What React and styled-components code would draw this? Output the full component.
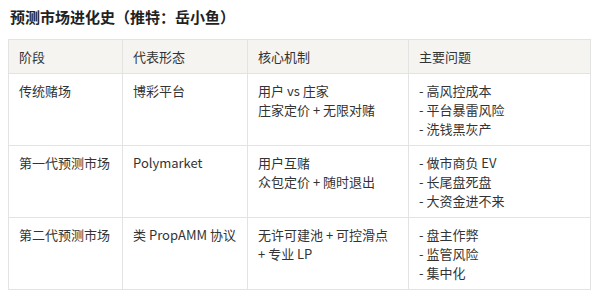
import React from 'react';
import styled, { createGlobalStyle } from 'styled-components';

const GlobalStyle = createGlobalStyle`
    body {
        margin: 0;
        background: #fff;
        font-family: "Noto Sans CJK SC", "Noto Sans", sans-serif;
        color: #333;
    }
`;

const Page = styled.div`
    padding: 6px 8px 0 8px;
`;

const Title = styled.h1`
    margin: 0 0 11px 2px;
    font-size: 15px;
    line-height: 22px;
    font-weight: 700;
    color: #222;
`;

const Table = styled.table`
    width: 582px;
    border-collapse: collapse;
    table-layout: fixed;
    font-size: 13px;
    line-height: 19px;
`;

const Head = styled.th`
    box-sizing: border-box;
    background: #f5f4f1;
    font-weight: 400;
    text-align: left;
    padding: 7px 10px;
    border: 1px solid #e3e3e3;
    width: ${props => props.$w}px;
`;

const Cell = styled.td`
    vertical-align: top;
    padding: 7px 10px;
    border: 1px solid #e3e3e3;
`;

const Line = styled.div`
    white-space: nowrap;
`;

const columns = [
    { label: '阶段', w: 114 },
    { label: '代表形态', w: 125 },
    { label: '核心机制', w: 161 },
    { label: '主要问题', w: 182 },
];

const rows = [
    ['传统赌场', '博彩平台', ['用户 vs 庄家', '庄家定价 + 无限对赌'], ['- 高风控成本', '- 平台暴雷风险', '- 洗钱黑灰产']],
    ['第一代预测市场', 'Polymarket', ['用户互赌', '众包定价 + 随时退出'], ['- 做市商负 EV', '- 长尾盘死盘', '- 大资金进不来']],
    ['第二代预测市场', '类 PropAMM 协议', ['无许可建池 + 可控滑点', '+ 专业 LP'], ['- 盘主作弊', '- 监管风险', '- 集中化']],
];

const renderCell = (value) =>
    Array.isArray(value) ? value.map((line, i) => <Line key={i}>{line}</Line>) : <Line>{value}</Line>;

export default function App() {
    return (
        <Page>
            <GlobalStyle />
            <Title>预测市场进化史（推特：岳小鱼）</Title>
            <Table>
                <thead>
                    <tr>
                        {columns.map(c => <Head key={c.label} $w={c.w}>{c.label}</Head>)}
                    </tr>
                </thead>
                <tbody>
                    {rows.map((row, r) => (
                        <tr key={r}>
                            {row.map((value, i) => <Cell key={i}>{renderCell(value)}</Cell>)}
                        </tr>
                    ))}
                </tbody>
            </Table>
        </Page>
    );
}
